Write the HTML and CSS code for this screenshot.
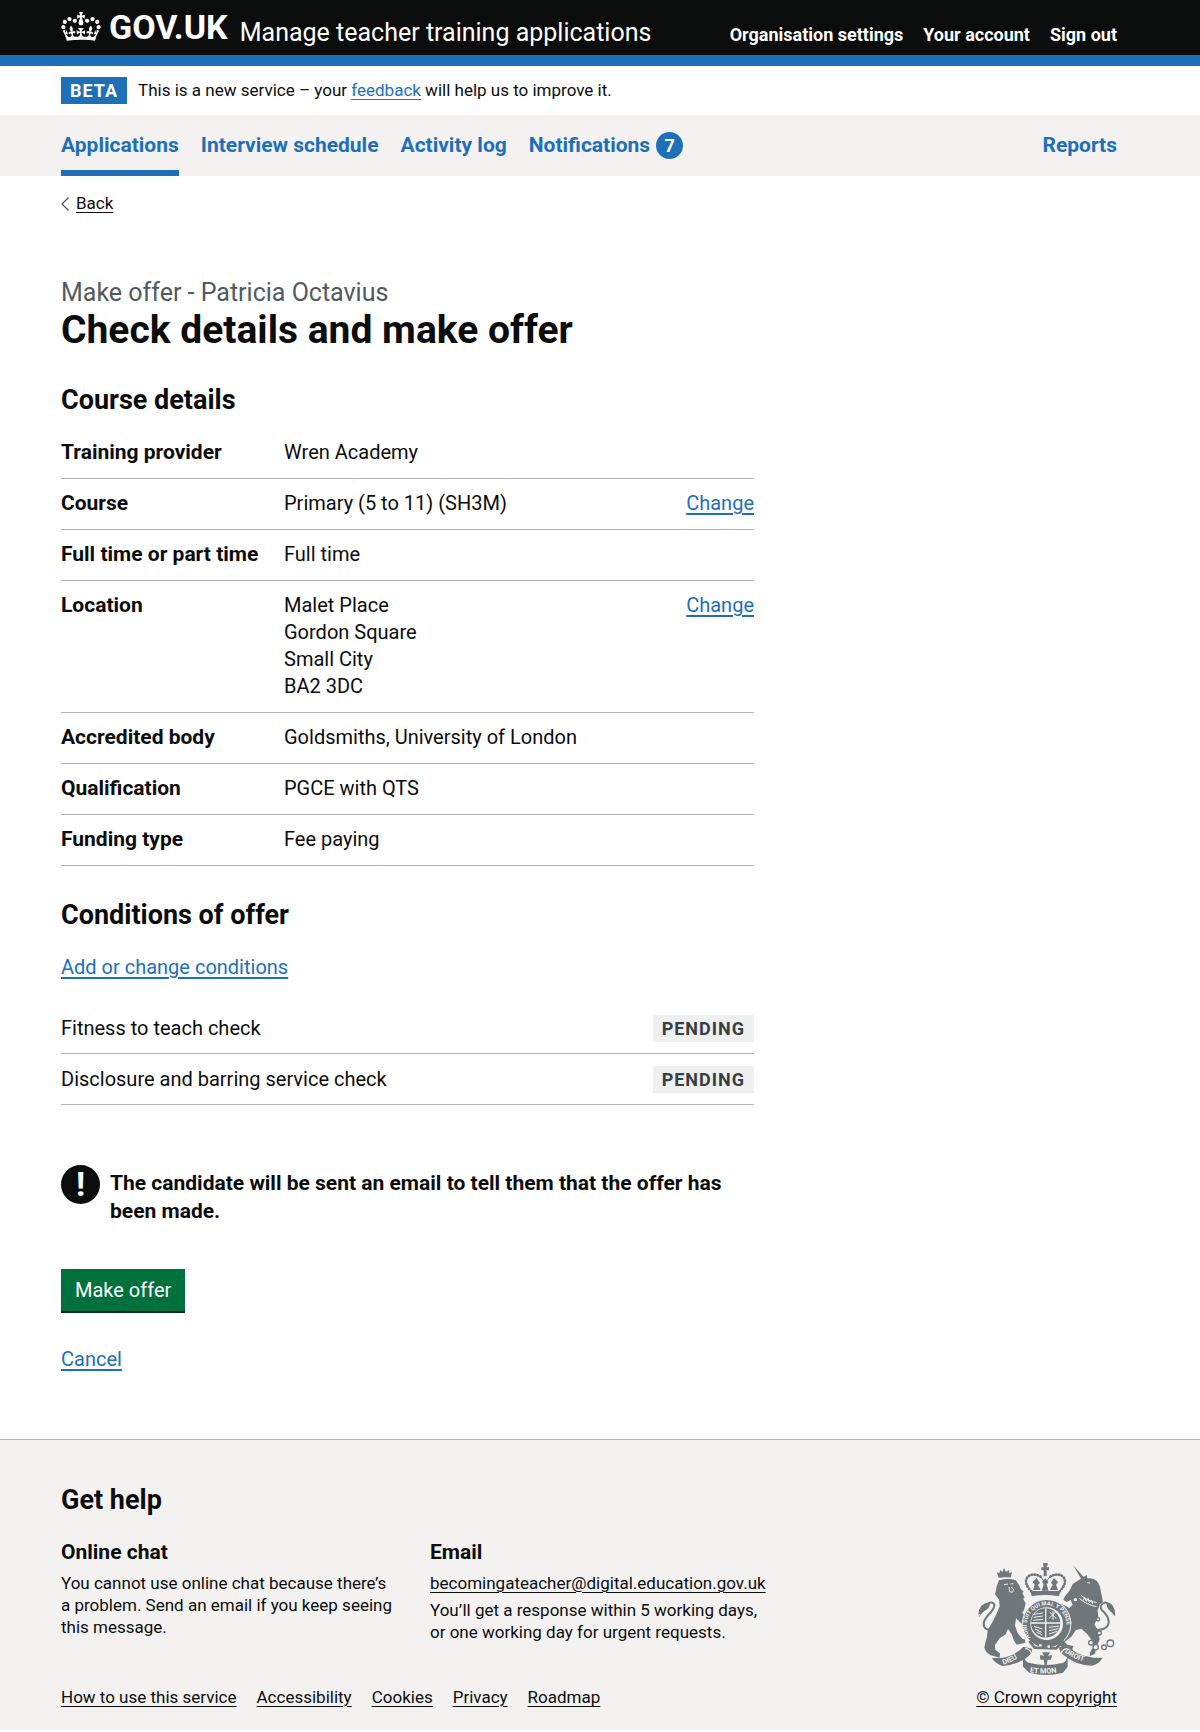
FILE: index.html
```html
<!DOCTYPE html>
<html lang="en">
<head>
<meta charset="utf-8">
<meta name="viewport" content="width=device-width, initial-scale=1">
<title>Check details and make offer - Manage teacher training applications</title>
<link rel="stylesheet" href="styles.css">
</head>
<body>
<header class="header">
  <div class="container header-row">
    <a class="logo" href="#">
      <svg class="crown" viewBox="0 0 132 97" aria-hidden="true"><path fill="currentColor" fill-rule="evenodd" d="M25 30.2c3.5 1.5 7.7-.2 9.1-3.7 1.5-3.6-.2-7.8-3.9-9.2-3.6-1.4-7.6.3-9.1 3.9-1.4 3.5.3 7.5 3.9 9zM9 39.5c3.6 1.5 7.8-.2 9.2-3.7 1.5-3.6-.2-7.8-3.9-9.1-3.6-1.5-7.6.2-9.1 3.8-1.4 3.5.3 7.5 3.8 9zM4.4 57.2c3.5 1.5 7.7-.2 9.1-3.8 1.5-3.6-.2-7.7-3.9-9.1-3.5-1.5-7.6.3-9.1 3.8-1.4 3.5.3 7.6 3.9 9.1zm38.3-21.4c3.5 1.5 7.7-.2 9.1-3.8 1.5-3.6-.2-7.7-3.9-9.1-3.6-1.5-7.6.3-9.1 3.8-1.3 3.6.4 7.7 3.9 9.1zm64.4-5.6c-3.6 1.5-7.8-.2-9.1-3.7-1.5-3.6.2-7.8 3.8-9.2 3.6-1.4 7.7.3 9.2 3.9 1.3 3.5-.4 7.5-3.9 9zm15.9 9.3c-3.6 1.5-7.7-.2-9.1-3.7-1.5-3.6.2-7.8 3.7-9.1 3.6-1.5 7.7.2 9.2 3.8 1.5 3.5-.3 7.5-3.8 9zm4.7 17.7c-3.6 1.5-7.8-.2-9.2-3.8-1.5-3.6.2-7.7 3.9-9.1 3.6-1.5 7.7.3 9.2 3.8 1.3 3.5-.4 7.6-3.9 9.1zM89.3 35.8c-3.6 1.5-7.8-.2-9.2-3.8-1.4-3.6.2-7.7 3.9-9.1 3.6-1.5 7.7.3 9.2 3.8 1.4 3.6-.3 7.7-3.9 9.1zM69.7 17.7l8.9 4.7V9.3l-8.9 2.8c-.2-.3-.5-.6-.9-.9L72.4 0H59.6l3.5 11.2c-.3.3-.6.5-.9.9l-8.8-2.8v13.1l8.8-4.7c.3.3.6.7.9.9l-5 15.4v.1c-.2.8-.4 1.6-.4 2.4 0 4.1 3.1 7.5 7 8.1h.2c.3 0 .7.1 1 .1.4 0 .7 0 1-.1h.2c4-.6 7.1-4.1 7.1-8.1 0-.8-.1-1.7-.4-2.4V34l-5.1-15.4c.4-.2.7-.6 1-.9zM66 92.8c16.9 0 32.8 1.1 47.1 3.2 4-16.9 8.9-26.7 14-33.5l-9.6-3.4c1 4.9 1.1 7.2 0 10.2-1.5-1.4-3-4.3-4.2-8.7L108.6 76c2.8-2 5-3.2 7.5-3.3-4.4 9.4-10 11.9-13.6 11.2-4.3-.8-6.3-4.6-5.6-7.9 1-4.7 5.7-5.9 8-.5 4.3-8.7-3-11.4-7.6-8.8 7.1-7.2 7.9-13.5 2.1-21.1-8 6.1-8.1 12.3-4.5 20.8-4.7-5.4-12.1-2.5-9.5 6.2 3.4-5.2 7.9-2 7.2 3.1-.6 4.3-6.4 7.8-13.5 7.2-10.3-.9-10.9-8-11.2-13.8 2.5-.5 7.1 1.8 11 7.3L80.2 60c-4.1 4.4-8 5.3-12.3 5.4 1.4-4.4 8-11.6 8-11.6H55.5s6.4 7.2 7.9 11.6c-4.2-.1-8-1-12.3-5.4l1.4 16.4c3.9-5.5 8.5-7.7 10.9-7.3-.3 5.8-.9 12.8-11.1 13.8-7.2.6-12.9-2.9-13.5-7.2-.7-5 3.8-8.3 7.1-3.1 2.7-8.7-4.6-11.6-9.4-6.2 3.7-8.5 3.6-14.7-4.6-20.8-5.8 7.6-5 13.9 2.2 21.1-4.7-2.6-11.9.1-7.7 8.8 2.3-5.5 7.1-4.2 8.1.5.7 3.3-1.3 7.1-5.7 7.9-3.5.7-9-1.8-13.5-11.2 2.5.1 4.7 1.3 7.5 3.3l-4.7-15.4c-1.2 4.4-2.7 7.2-4.3 8.7-1.1-3-.9-5.3 0-10.2l-9.5 3.4c5 6.9 9.9 16.7 14 33.5 14.8-2.1 30.8-3.2 47.7-3.2z"/></svg>
      <span>GOV.UK</span>
    </a>
    <a class="service-name" href="#">Manage teacher training applications</a>
    <nav class="account-nav" aria-label="Account">
      <a href="#">Organisation settings</a>
      <a href="#">Your account</a>
      <a href="#">Sign out</a>
    </nav>
  </div>
</header>

<div class="phase">
  <div class="container phase-row">
    <strong class="tag tag-beta">BETA</strong>
    <span>This is a new service – your <a class="link" href="#">feedback</a> will help us to improve it.</span>
  </div>
</div>

<nav class="primary-nav" aria-label="Primary">
  <div class="container primary-row">
    <a class="current" aria-current="page" href="#">Applications</a>
    <a href="#">Interview schedule</a>
    <a href="#">Activity log</a>
    <a href="#">Notifications <span class="count">7</span></a>
    <a class="push-right" href="#">Reports</a>
  </div>
</nav>

<div class="page">
  <div class="container">
    <div class="back">
      <svg class="back-arrow" viewBox="0 0 8 14" aria-hidden="true"><path d="M7.5.5 1 7l6.500 6.500" fill="none" stroke="#505a5f" stroke-width="1.300"/></svg>
      <a href="#">Back</a>
    </div>
    <main class="main">
      <h1><span class="caption">Make offer - Patricia Octavius</span>Check details and make offer</h1>

      <h2>Course details</h2>
      <dl class="summary">
        <div class="row"><dt>Training provider</dt><dd>Wren Academy</dd></div>
        <div class="row"><dt>Course</dt><dd>Primary (5 to 11) (SH3M)</dd><dd class="action"><a class="link" href="#" aria-label="Change course">Change</a></dd></div>
        <div class="row"><dt>Full time or part time</dt><dd>Full time</dd></div>
        <div class="row"><dt>Location</dt><dd>Malet Place<br>Gordon Square<br>Small City<br>BA2 3DC</dd><dd class="action"><a class="link" href="#" aria-label="Change location">Change</a></dd></div>
        <div class="row"><dt>Accredited body</dt><dd>Goldsmiths, University of London</dd></div>
        <div class="row"><dt>Qualification</dt><dd>PGCE with QTS</dd></div>
        <div class="row"><dt>Funding type</dt><dd>Fee paying</dd></div>
      </dl>

      <h2>Conditions of offer</h2>
      <p class="conditions-link"><a class="link" href="#">Add or change conditions</a></p>
      <ul class="conditions">
        <li>Fitness to teach check <strong class="tag tag-grey">PENDING</strong></li>
        <li>Disclosure and barring service check <strong class="tag tag-grey">PENDING</strong></li>
      </ul>

      <div class="warning">
        <span class="warning-icon" aria-hidden="true">!</span>
        <strong>The candidate will be sent an email to tell them that the offer has been made.</strong>
      </div>

      <button class="button" type="button">Make offer</button>
      <p class="cancel"><a class="link" href="#">Cancel</a></p>
    </main>
  </div>
</div>

<footer class="footer">
  <div class="container footer-row">
    <div class="footer-main">
      <h2>Get help</h2>
      <div class="help">
        <section>
          <h3>Online chat</h3>
          <p>You cannot use online chat because there’s a problem. Send an email if you keep seeing this message.</p>
        </section>
        <section>
          <h3>Email</h3>
          <p><a href="#">becomingateacher@digital.education.gov.uk</a></p>
          <p>You’ll get a response within 5 working days, or one working day for urgent requests.</p>
        </section>
      </div>
      <nav class="footer-links" aria-label="Footer">
        <a href="#">How to use this service</a>
        <a href="#">Accessibility</a>
        <a href="#">Cookies</a>
        <a href="#">Privacy</a>
        <a href="#">Roadmap</a>
      </nav>
    </div>
    <a class="copyright" href="#">
      <svg class="crest" viewBox="108 72 414 336" aria-hidden="true">
        <defs>
          <path id="garter" d="M266 295A60 60 0 1 1 362 295"/>
          <path id="motto-left" d="M184 377Q218 368 248 341"/>
          <path id="motto-mid" d="M263 400Q312 409 362 397"/>
          <path id="motto-right" d="M368 340Q402 366 450 372"/>
        </defs>
        <g fill="#6f777b">
          <!-- lion -->
          <path d="M170 116l-6-17 8 4 2-10 7 6 5-12 6 12 8-6 2 10 8-4-4 17z"/>
          <path d="M171 124q28-10 50 0l10 13 5 12 9 9-4 4 7 14-5 3 8 14-5 20-6 8 14 13 10 22-4 12-16-9-22-21-3 22 8 22 12 16 10 4 1 9-26 6-9-14-5-16-12-17-7 16-18 12-14 20 1 14 14 11-1 13-27-7-13-10-6-13 4-19 4-14 2-20 14-23 12-24 10-24-2-20-12-16 3-12 2-12z"/>
          <!-- unicorn -->
          <path d="M393 78l34 38-8 6z"/>
          <path d="M434 108l2 10q28-4 37 22l7 34 3 16-10 6-6 20 2 18-12 22 12 20 4 26-10 22-4 20-16 8 2-14 10-16-4-16-16-22-17-15-16 4-14 20-20 16 8 8 18 4-4 12-24-2-14-14 20-26 12-22 4-20-4-14-14 14-16 0 2-9 16-8-2-12-10-8-18-1-4-10 12-8 18 6 14 8 10-10-6-14-12 6-10-6 4-10 16-20 8-18z"/>
          <!-- ribbons -->
          <path d="M149 357l27 0q42-5 68-34l26 6q2 12-8 20-26 26-80 32-20-6-33-24z"/>
          <path d="M352 324l28-2q26 30 76 34l26 0q-10 18-32 24-50 0-88-34-12-10-10-22z"/>
          <path d="M243 350q8 20 20 22 49 12 98 0 12-4 16-22v33l-14 18q-50 14-101 0l-19-18z"/>
          <path d="M300 340h24l-6 10 12-2-3 14h-10l-3 17h-6l-3-17h-10l-1-14 12 2z"/>
        </g>
        <!-- tails -->
        <g fill="none" stroke="#6f777b" stroke-linecap="round">
          <path d="M152 272q-28 4-27-20 3-14 22-32 18-24 4-29-14-2-24 16" stroke-width="6"/>
          <path d="M462 273q40 0 38-28-4-18-20-31-12-16 10-24 18 6 18 26" stroke-width="6"/>
        </g>
        <path d="M110 232q-2-20 8-32 14-12 26-8-2 18-14 22zM519 232q2-22-10-36-8-6-16-6 2 22 12 26zM118 226l-10-2 3 10z" fill="#6f777b"/>
        <!-- garter -->
        <circle cx="314" cy="254" r="74" fill="#f3f2f1"/>
        <circle cx="314" cy="254" r="60" fill="none" stroke="#6f777b" stroke-width="22"/>
        <path d="M262 306l16 20 64 2 24-22" fill="none" stroke="#6f777b" stroke-width="8"/>
        <!-- crown above the shield -->
        <path d="M269 159q-27-26-14-46 18-16 47-1l5-18h8l5 18q28-15 46 1 13 21-14 46z" fill="#f3f2f1"/>
        <path d="M304 72h13v8h-3v5h7v9h-7v18h-9V94h-7v-9h7v-5h-2zM265 156h90l-4 16q-41-8-82 0zM273 153l5-16-6-9 12-11 10 15-6 5 8 16zM299 155l6-19-5-8 10-10 9 11-5 8 6 18zM324 153l8-16-5-6 9-14 12 12-6 8 6 16z" fill="#6f777b"/>
        <path d="M268 157q-24-25-12-42 15-16 40-2M353 157q24-25 12-42-15-16-40-2" fill="none" stroke="#6f777b" stroke-width="8" stroke-linecap="round" stroke-dasharray="1 8"/>
        <path d="M268 157q-24-25-12-42 15-16 42 0l12 18 12-18q28-16 42 0 12 17-11 42" fill="none" stroke="#6f777b" stroke-width="3"/>
        <!-- quartered shield -->
        <circle cx="311" cy="252" r="44" fill="#6f777b"/>
        <path d="M311 208v88M267 252h88" stroke="#f3f2f1" stroke-width="4"/>
        <path d="M276 226l27-4M275 235l28-4M274 244l29-3M321 285l24-8M321 275l28-6M321 265l30-4M276 262l25 8M279 270l20 10M284 279l16 8M323 219l20 20M321 238l21-20M333 217v26" stroke="#f3f2f1" stroke-width="3"/>
        <!-- chain -->
        <g fill="#f3f2f1" stroke="#6f777b" stroke-width="4">
          <circle cx="447" cy="311" r="7"/>
          <circle cx="461" cy="325" r="8"/>
          <circle cx="486" cy="325" r="7"/>
          <circle cx="505" cy="313" r="10"/>
          <circle cx="472" cy="282" r="6"/>
          <circle cx="468" cy="241" r="5"/>
          <circle cx="400" cy="182" r="7"/>
        </g>
        <!-- details picked out in the background colour -->
        <g stroke="#f3f2f1" stroke-width="3" fill="none">
          <path d="M171 120q25-8 42 0M186 137l12-2M206 135l8-1M201 144l2 14 8 2 4-10-8-6"/>
          <path d="M416 168q20 18 48 23M412 178q22 20 52 25M424 185l4-10 5 12 6-9 3 13 7-7 3 11M436 131l8 1"/>
          <path d="M250 328q20 4 20 24M376 328q-20 4-20 24" stroke-width="4"/>
        </g>
        <circle cx="295" cy="319" r="4" fill="#f3f2f1"/><circle cx="320" cy="323" r="4" fill="#f3f2f1"/>
        <g class="motto">
          <text class="motto-garter"><textPath href="#garter">HONI SOIT QUI MAL Y PENSE</textPath></text>
          <text><textPath href="#motto-left">DIEU</textPath></text>
          <text><textPath href="#motto-mid">ET MON</textPath></text>
          <text><textPath href="#motto-right">DROIT</textPath></text>
        </g>
      </svg>
      <span>© Crown copyright</span>
    </a>
  </div>
</footer>
</body>
</html>
```
FILE: styles.css
```css
* {
  box-sizing: border-box;
}

body {
  margin: 0;
  background: #fff;
  color: #0b0c0c;
  font-family: Roboto, "Liberation Sans", Arial, sans-serif;
  font-size: 20px;
  line-height: 27px;
}

h1, h2, h3, p, ul, dl, dd {
  margin: 0;
}

a {
  color: inherit;
  text-underline-offset: 3px;
  text-decoration-thickness: 1px;
}

.link {
  color: #1d70b8;
}

.header,
.phase,
.primary-nav,
.page,
.footer {
  padding: 0 52px 0 30px;
}

.container {
  max-width: 1056px;
  margin: 0 auto;
}

/* Header */
.header {
  background: #0b0c0c;
  border-bottom: 11px solid #1d70b8;
  color: #fff;
}

.header a,
.primary-nav a {
  text-decoration: none;
}

.header-row {
  display: flex;
  align-items: baseline;
  height: 55px;
}

.logo {
  display: flex;
  gap: 8px;
  font-size: 34px;
  font-weight: 700;
  line-height: 54px;
}

.crown {
  width: 40px;
  height: 29px;
  margin-top: 12px;
}

.service-name {
  margin-left: 12px;
  font-size: 25px;
}

.account-nav {
  display: flex;
  gap: 20px;
  margin-left: auto;
  font-size: 18px;
  font-weight: 700;
}

/* Phase banner */
.phase-row {
  display: flex;
  align-items: center;
  gap: 11px;
  padding: 11px 0;
  font-size: 17px;
}

.tag {
  padding: 0 9px;
  font-size: 18px;
  font-weight: 700;
  letter-spacing: 1px;
}

.tag-beta {
  background: #1d70b8;
  color: #fff;
}

.tag-grey {
  background: #eeefef;
  color: #383f43;
}

/* Primary navigation */
.primary-nav {
  background: #f3f2f1;
  color: #1d70b8;
  font-size: 21px;
  font-weight: 700;
}

.primary-row {
  display: flex;
  gap: 22px;
}

.primary-row a {
  display: flex;
  align-items: center;
  gap: 6px;
  padding: 17px 0 11px;
  border-bottom: 6px solid transparent;
}

.primary-row .current {
  border-bottom-color: #1d70b8;
}

.count {
  width: 27px;
  border-radius: 50%;
  background: #1d70b8;
  color: #fff;
  font-size: 18px;
  text-align: center;
}

.primary-row .push-right {
  margin-left: auto;
}

/* Content */
.back {
  display: flex;
  align-items: center;
  gap: 7px;
  padding-top: 14px;
  font-size: 17px;
}

.back-arrow {
  width: 8px;
  height: 14px;
}

.main {
  max-width: 693px;
  padding: 59px 0 66px;
}

h1 {
  margin-bottom: 33px;
  font-size: 39px;
  line-height: 42px;
}

.caption {
  display: block;
  color: #505a5f;
  font-size: 25px;
  font-weight: 400;
  line-height: 33px;
}

h2 {
  margin-bottom: 11px;
  font-size: 27px;
  line-height: 33px;
}

h3 {
  font-size: 21px;
  line-height: 27px;
}

.summary {
  margin-bottom: 33px;
}

.row {
  display: flex;
  padding: 11px 0 12px;
  border-bottom: 1px solid #b1b4b6;
}

.row dt {
  width: 223px;
  font-size: 21px;
  font-weight: 700;
}

.action {
  margin-left: auto;
}

.main .link {
  text-decoration-thickness: 2px;
}

.conditions-link {
  padding-top: 11px;
}

.conditions {
  padding: 22px 0 0;
  list-style: none;
}

.conditions li {
  display: flex;
  align-items: center;
  justify-content: space-between;
  padding: 12px 0 11px;
  border-bottom: 1px solid #b1b4b6;
}

.warning {
  display: flex;
  gap: 10px;
  margin-top: 60px;
  font-size: 21px;
  line-height: 28px;
}

.warning strong {
  padding-top: 4px;
}

.warning-icon {
  flex: none;
  width: 39px;
  height: 39px;
  border-radius: 50%;
  background: #0b0c0c;
  color: #fff;
  font-size: 34px;
  font-weight: 700;
  line-height: 39px;
  text-align: center;
}

.button {
  margin-top: 44px;
  padding: 8px 14px 7px;
  border: 0;
  background: #00703c;
  box-shadow: 0 2px 0 #002d18;
  color: #fff;
  font: inherit;
}

.cancel {
  padding-top: 35px;
}

/* Footer */
.footer {
  padding-top: 44px;
  padding-bottom: 22px;
  border-top: 1px solid #b1b4b6;
  background: #f3f2f1;
  font-size: 17px;
  line-height: 22px;
}

.footer-row {
  display: flex;
  align-items: flex-end;
  justify-content: space-between;
}

.footer h2 {
  margin-bottom: 22px;
}

.help {
  display: grid;
  grid-template-columns: 336px 345px;
  gap: 33px;
}

.help h3 {
  margin-bottom: 6px;
}

.help p {
  margin-bottom: 5px;
}

.footer-links {
  display: flex;
  gap: 20px;
  margin-top: 38px;
}

.copyright {
  display: flex;
  flex-direction: column;
  align-items: center;
  gap: 11px;
}

.crest {
  width: 138px;
  height: 112px;
}

.motto {
  fill: #f3f2f1;
  font-size: 22px;
  font-weight: 700;
}

.motto-garter {
  font-size: 17px;
}
```
